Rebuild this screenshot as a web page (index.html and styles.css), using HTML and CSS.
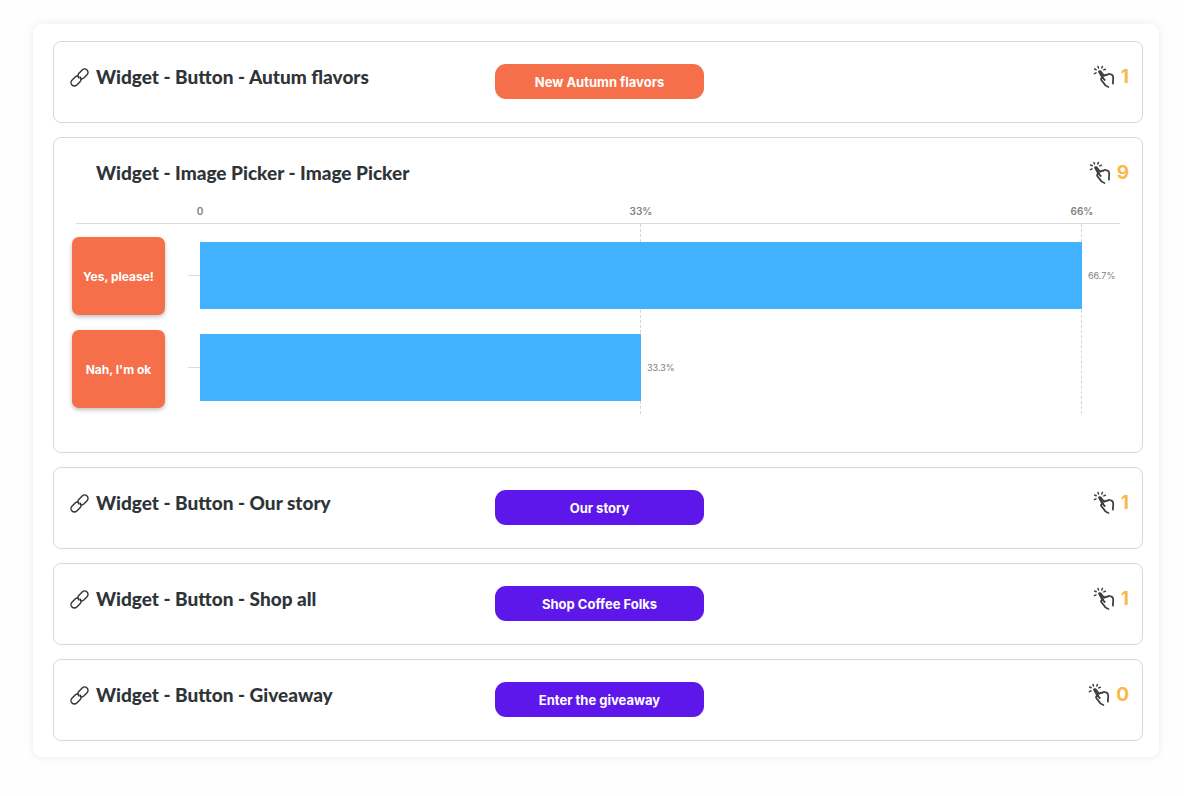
FILE: index.html
```html
<!DOCTYPE html>
<html lang="en">
<head>
  <meta charset="UTF-8" />
  <title>Widget clicks</title>
  <meta name="viewport" content="width=device-width, initial-scale=1">
  <link rel="stylesheet" href="styles.css">
</head>
<body>
  <!-- Shared icons -->
  <svg class="sprite" aria-hidden="true">
    <symbol id="icon-link" viewBox="0 0 20 20">
      <g transform="rotate(-45 10 10)" fill="none" stroke="currentColor" stroke-width="1.5" stroke-linecap="round">
        <path d="M10.2 8.2 A3.6 3.6 0 0 0 7.2 6.4 H2.4 A3.6 3.6 0 0 0 2.4 13.6 H7.2 A3.6 3.6 0 0 0 10.8 10" />
        <path d="M9.8 11.8 A3.6 3.6 0 0 0 12.8 13.6 H17.6 A3.6 3.6 0 0 0 17.6 6.4 H12.8 A3.6 3.6 0 0 0 9.2 10" />
      </g>
    </symbol>
    <symbol id="icon-tap" viewBox="0 0 22 24">
      <g fill="none" stroke="currentColor" stroke-linecap="round" stroke-linejoin="round">
        <path stroke-width="1.5" d="M1.6 4 L3.2 4.7 M5 1.4 L5.5 3 M9.4 1.4 L8.8 3 M12.4 4.2 L10.8 4.9 M1.4 8.6 L3 7.9" />
        <path stroke-width="2.6" d="M6.4 6.6 L9.8 12.6" />
        <path stroke-width="1.8" d="M15.4 22 C12.8 21 11.4 19.8 10.6 17.8 L8.2 15 C7.6 13.6 8.6 12.6 9.8 13.2 L11.8 15 M7.6 6.2 L11.2 10.8 C12.4 9.6 13.4 9.6 14.2 10 C15.2 8.8 16.6 8.8 17.4 9.4 C19 9.2 20 10.6 20.2 12.6 C20.4 14.8 19.6 16.2 20 18.6" />
      </g>
    </symbol>
  </svg>

  <main class="panel">
    <section class="card widget">
      <h2 class="title">
        <svg class="link-icon" aria-hidden="true"><use href="#icon-link" /></svg>
        Widget - Button - Autum flavors
      </h2>
      <button type="button" class="cta orange">New Autumn flavors</button>
      <div class="clicks"><svg class="tap-icon" aria-hidden="true"><use href="#icon-tap" /></svg>1</div>
    </section>

    <section class="card picker">
      <div class="widget">
        <h2 class="title no-icon">Widget - Image Picker - Image Picker</h2>
        <div class="clicks"><svg class="tap-icon" aria-hidden="true"><use href="#icon-tap" /></svg>9</div>
      </div>

      <div class="chart">
        <div class="axis">
          <span>0</span>
          <span>33%</span>
          <span>66%</span>
        </div>
        <div class="options">
          <button type="button" class="option">Yes, please!</button>
          <button type="button" class="option">Nah, I'm ok</button>
        </div>
        <div class="gridlines"><i></i><i></i></div>
        <div class="bars">
          <div class="bar-row">
            <div class="bar" style="width: 100%"></div>
            <span class="value">66.7%</span>
          </div>
          <div class="bar-row">
            <div class="bar" style="width: 50%"></div>
            <span class="value">33.3%</span>
          </div>
        </div>
      </div>
    </section>

    <section class="card widget">
      <h2 class="title">
        <svg class="link-icon" aria-hidden="true"><use href="#icon-link" /></svg>
        Widget - Button - Our story
      </h2>
      <button type="button" class="cta purple">Our story</button>
      <div class="clicks"><svg class="tap-icon" aria-hidden="true"><use href="#icon-tap" /></svg>1</div>
    </section>

    <section class="card widget">
      <h2 class="title">
        <svg class="link-icon" aria-hidden="true"><use href="#icon-link" /></svg>
        Widget - Button - Shop all
      </h2>
      <button type="button" class="cta purple">Shop Coffee Folks</button>
      <div class="clicks"><svg class="tap-icon" aria-hidden="true"><use href="#icon-tap" /></svg>1</div>
    </section>

    <section class="card widget">
      <h2 class="title">
        <svg class="link-icon" aria-hidden="true"><use href="#icon-link" /></svg>
        Widget - Button - Giveaway
      </h2>
      <button type="button" class="cta purple">Enter the giveaway</button>
      <div class="clicks"><svg class="tap-icon" aria-hidden="true"><use href="#icon-tap" /></svg>0</div>
    </section>
  </main>
</body>
</html>
```
FILE: styles.css
```css
* {
  box-sizing: border-box;
}

body {
  margin: 0;
  padding: 24px 25px 24px 33px;
  font-family: Inter, 'Liberation Sans', sans-serif;
  background: #fefefe;
  color: #2f3437;
}

.sprite {
  display: none;
}

.panel {
  display: flex;
  flex-direction: column;
  gap: 14px;
  padding: 17px 16px 16px 20px;
  background: white;
  border-radius: 9px;
  box-shadow: 0 0 8px rgba(0,0,0,0.08);
}

.card {
  padding: 22px 13px 23px 16px;
  border: 1px solid #d9d9db;
  border-radius: 8px;
}

.widget {
  display: grid;
  grid-template-columns: 1fr 209px 1fr;
  align-items: start;
}

.title {
  display: flex;
  align-items: center;
  gap: 7px;
  margin: 0;
  font-family: Lato, Inter, sans-serif;
  font-size: 19px;
  line-height: 26px;
  font-weight: 900;
  white-space: nowrap;
}

.title.no-icon {
  padding-left: 26px;
}

.link-icon {
  flex: none;
  width: 19px;
  height: 19px;
}

.clicks {
  grid-column: 3;
  display: flex;
  align-items: center;
  justify-content: flex-end;
  gap: 6px;
  font-size: 19px;
  line-height: 26px;
  font-weight: 700;
  color: #fbb748;
}

.tap-icon {
  width: 22px;
  height: 24px;
  color: #3b4043;
}

button {
  padding: 0;
  border: 0;
  font-family: inherit;
  font-weight: 700;
  color: white;
}

.cta {
  height: 35px;
  border-radius: 11px;
  font-size: 13px;
}

.orange {
  background: #f56f4b;
}

.purple {
  background: #5e17eb;
}

/* Image picker results */
.picker {
  padding-bottom: 38px;
}

.chart {
  display: grid;
  grid-template-columns: 93px 1fr;
  column-gap: 23px;
  padding: 18px 9px 0 2px;
}

.axis {
  grid-column: 1 / 3;
  display: flex;
  justify-content: space-between;
  margin-left: 4px;
  padding: 0 38px 5px 124px;
  border-bottom: 1px solid #dcdcdc;
  font-size: 10px;
  line-height: 14px;
  font-weight: 600;
  color: #808080;
}

.axis span {
  display: flex;
  justify-content: center;
  width: 0;
}

.options {
  display: flex;
  flex-direction: column;
  gap: 15px;
  padding-top: 13px;
}

.option {
  height: 78px;
  border-radius: 7px;
  background: #f56f4b;
  box-shadow: 0 2px 4px rgba(0,0,0,0.25);
  font-size: 12px;
}

/* gridlines and bars share one cell */
.gridlines,
.bars {
  grid-area: 2 / 2;
}

.gridlines {
  display: flex;
  height: 190px;
  margin: 0 38px 0 12px;
}

.gridlines i {
  flex: 1;
  border-right: 1px dashed #d4d4d4;
}

.bars {
  display: flex;
  flex-direction: column;
  gap: 25px;
  padding: 18px 38px 0 12px;
}

.bar-row {
  display: flex;
  align-items: center;
}

/* tick left of each bar */
.bar-row::before {
  content: '';
  flex: none;
  width: 12px;
  margin-left: -12px;
  border-top: 1px solid #dcdcdc;
}

.bar {
  flex: none;
  height: 67px;
  background: #40b2ff;
}

.value {
  margin-left: 6px;
  font-size: 9px;
  color: #808080;
}
```
